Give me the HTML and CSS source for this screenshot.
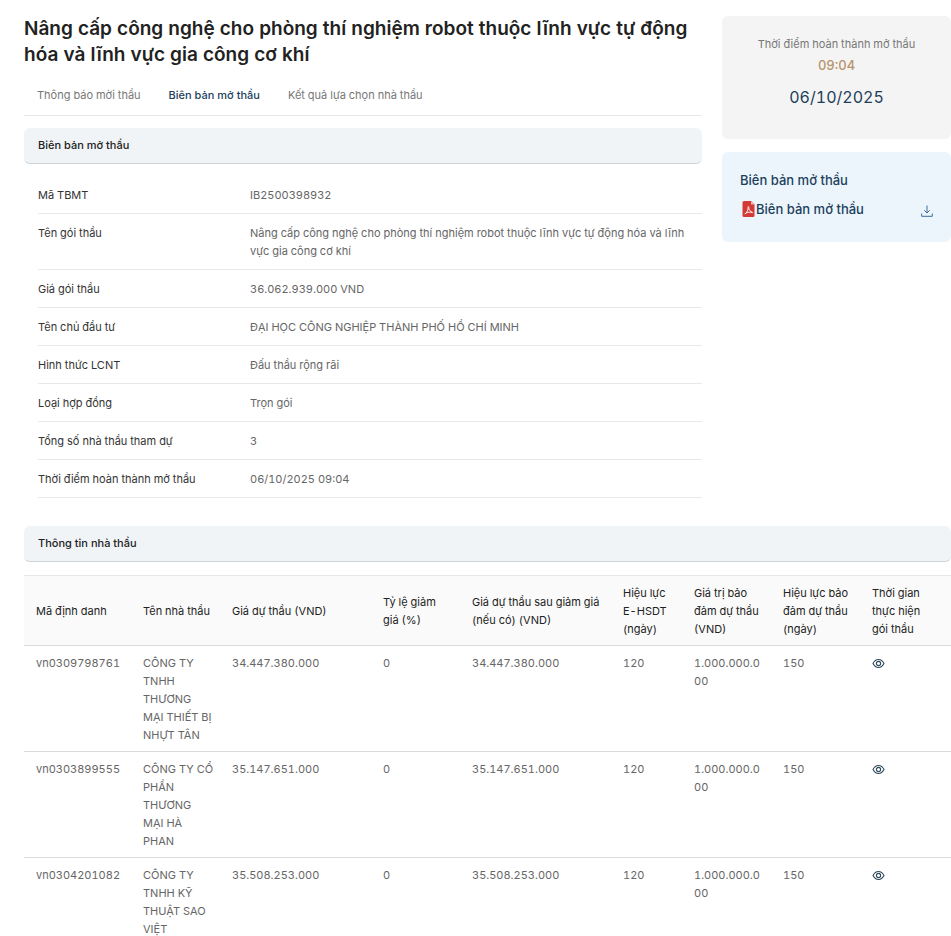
FILE: index.html
```html
<!DOCTYPE html>
<html lang="vi">
    <head>
        <meta charset="utf-8">
        <meta name="viewport" content="width=device-width, initial-scale=1">
        <title>Biên bản mở thầu</title>
        <link rel="stylesheet" href="styles.css">
    </head>
    <body>
        <svg class="defs" aria-hidden="true">
            <symbol id="eye" viewBox="0 0 14 12">
                <path d="M1 6C2.5 3.1 4.5 1.7 7 1.7S11.5 3.1 13 6C11.5 8.9 9.5 10.3 7 10.3S2.5 8.9 1 6Z" fill="none" stroke="currentColor" stroke-width="1.2"/>
                <circle cx="7" cy="6" r="2.3" fill="none" stroke="currentColor" stroke-width="1.2"/>
            </symbol>
        </svg>

        <div class="top">
            <main class="main">
                <h1 class="title">Nâng cấp công nghệ cho phòng thí nghiệm robot thuộc lĩnh vực tự động hóa và lĩnh vực gia công cơ khí</h1>
                <nav class="tabs">
                    <a class="tab" href="#">Thông báo mời thầu</a>
                    <a class="tab active" href="#">Biên bản mở thầu</a>
                    <a class="tab" href="#">Kết quả lựa chọn nhà thầu</a>
                </nav>

                <h2 class="section-title">Biên bản mở thầu</h2>
                <dl class="info">
                    <div class="info-row"><dt>Mã TBMT</dt><dd>IB2500398932</dd></div>
                    <div class="info-row"><dt>Tên gói thầu</dt><dd>Nâng cấp công nghệ cho phòng thí nghiệm robot thuộc lĩnh vực tự động hóa và lĩnh vực gia công cơ khí</dd></div>
                    <div class="info-row"><dt>Giá gói thầu</dt><dd>36.062.939.000 VND</dd></div>
                    <div class="info-row"><dt>Tên chủ đầu tư</dt><dd>ĐẠI HỌC CÔNG NGHIỆP THÀNH PHỐ HỒ CHÍ MINH</dd></div>
                    <div class="info-row"><dt>Hình thức LCNT</dt><dd>Đấu thầu rộng rãi</dd></div>
                    <div class="info-row"><dt>Loại hợp đồng</dt><dd>Trọn gói</dd></div>
                    <div class="info-row"><dt>Tổng số nhà thầu tham dự</dt><dd>3</dd></div>
                    <div class="info-row"><dt>Thời điểm hoàn thành mở thầu</dt><dd>06/10/2025 09:04</dd></div>
                </dl>
            </main>

            <aside class="side">
                <div class="card time-card">
                    <p class="time-label">Thời điểm hoàn thành mở thầu</p>
                    <p class="time-hour">09:04</p>
                    <p class="time-date">06/10/2025</p>
                </div>
                <div class="card file-card">
                    <h3 class="file-title">Biên bản mở thầu</h3>
                    <div class="file">
                        <a class="file-link" href="#">
                            <svg class="pdf-icon" viewBox="0 0 12 16" aria-hidden="true">
                                <path d="M1.5 0H8.5L12 3.5V14.5Q12 16 10.5 16H1.5Q0 16 0 14.5V1.5Q0 0 1.5 0Z" fill="#d33a35"/>
                                <path d="M8.500 0V3.500H12Z" fill="#f3b5b3"/>
                                <path d="M2.5 13C4.5 11.5 6 8.5 5.6 6.2C5.5 5.2 6.6 5.3 6.3 6.7C5.9 8.5 8 10.8 9.7 11.2C10.5 11.4 10.2 12 9.3 11.6C7.5 10.8 4.8 11.3 3.5 12.1C2.6 12.6 2 13.2 2.5 13Z" fill="none" stroke="#fff" stroke-width="0.9"/>
                            </svg>Biên bản mở thầu
                        </a>
                        <button class="download" type="button" aria-label="Tải xuống">
                            <svg viewBox="0 0 12 12" aria-hidden="true">
                                <path d="M6 0.5V8M3.3 5.3L6 8L8.7 5.3M0.7 8.5V11.3H11.3V8.5" fill="none" stroke="currentColor"/>
                            </svg>
                        </button>
                    </div>
                </div>
            </aside>
        </div>

        <section class="bidders">
            <h2 class="section-title">Thông tin nhà thầu</h2>
            <table class="bid-table">
                <colgroup>
                    <col class="c-id"><col class="c-name"><col class="c-price"><col class="c-rate"><col class="c-final"><col class="c-valid"><col class="c-bond"><col class="c-bond"><col class="c-time">
                </colgroup>
                <thead>
                    <tr>
                        <th>Mã định danh</th>
                        <th>Tên nhà thầu</th>
                        <th>Giá dự thầu (VND)</th>
                        <th>Tỷ lệ giảm giá (%)</th>
                        <th>Giá dự thầu sau giảm giá (nếu có) (VND)</th>
                        <th>Hiệu lực E-HSDT (ngày)</th>
                        <th>Giá trị bảo đảm dự thầu (VND)</th>
                        <th>Hiệu lực bảo đảm dự thầu (ngày)</th>
                        <th>Thời gian thực hiện<br>gói thầu</th>
                    </tr>
                </thead>
                <tbody>
                    <tr>
                        <td>vn0309798761</td>
                        <td>CÔNG TY TNHH THƯƠNG<br>MẠI THIẾT BỊ NHỰT TÂN</td>
                        <td>34.447.380.000</td>
                        <td>0</td>
                        <td>34.447.380.000</td>
                        <td>120</td>
                        <td>1.000.000.000</td>
                        <td>150</td>
                        <td><button class="view" type="button" aria-label="Xem"><svg><use href="#eye"/></svg></button></td>
                    </tr>
                    <tr>
                        <td>vn0303899555</td>
                        <td>CÔNG TY CỔ PHẦN THƯƠNG<br>MẠI HÀ<br>PHAN</td>
                        <td>35.147.651.000</td>
                        <td>0</td>
                        <td>35.147.651.000</td>
                        <td>120</td>
                        <td>1.000.000.000</td>
                        <td>150</td>
                        <td><button class="view" type="button" aria-label="Xem"><svg><use href="#eye"/></svg></button></td>
                    </tr>
                    <tr>
                        <td>vn0304201082</td>
                        <td>CÔNG TY TNHH KỸ THUẬT SAO VIỆT</td>
                        <td>35.508.253.000</td>
                        <td>0</td>
                        <td>35.508.253.000</td>
                        <td>120</td>
                        <td>1.000.000.000</td>
                        <td>150</td>
                        <td><button class="view" type="button" aria-label="Xem"><svg><use href="#eye"/></svg></button></td>
                    </tr>
                </tbody>
            </table>
        </section>
    </body>
</html>
```

FILE: styles.css
```css
* {
    box-sizing: border-box;
}

body {
    margin: 0;
    padding: 16px 0 0 24px;
    background: #fff;
    color: #222;
    font: 11px/18px Inter, "Noto Sans", sans-serif;
    font-variant-numeric: tabular-nums;
}

h1, h2, h3, p, dl, dd {
    margin: 0;
}

a {
    color: inherit;
    text-decoration: none;
}

button {
    padding: 0;
    border: 0;
    background: none;
    cursor: pointer;
}

.defs {
    display: none;
}

.top {
    display: grid;
    grid-template-columns: minmax(0, 678fr) minmax(0, 229fr);
    gap: 20px;
    align-items: start;
}

.title {
    font-size: 19px;
    line-height: 26px;
    font-weight: 600;
}

.tabs {
    display: flex;
    gap: 28px;
    padding: 18px 13px 11px;
    border-bottom: 1px solid #e6e9eb;
    color: #777;
}

.tab.active {
    color: #1d3f5c;
    font-weight: 500;
}

.section-title {
    padding: 8px 14px 9px;
    border-bottom: 1px solid #ccd4da;
    border-radius: 6px;
    background: #f0f4f7;
    font-size: 11px;
    line-height: 18px;
    font-weight: 500;
}

.main .section-title {
    margin-top: 12px;
}

.info {
    margin: 12px 0 0 14px;
}

.info-row {
    display: grid;
    grid-template-columns: 212px 1fr;
    padding: 10px 0 9px;
    border-bottom: 1px solid #e8e8e8;
}

.info-row dt {
    color: #333;
}

.info-row dd {
    color: #666;
}

.card {
    border-radius: 6px;
}

.time-card {
    padding: 19px 16px 28px;
    background: #f4f4f4;
    text-align: center;
}

.time-label {
    color: #777;
}

.time-hour {
    color: #b8936b;
    font-size: 13px;
    line-height: 24px;
    font-weight: 500;
}

.time-date {
    padding-top: 6px;
    color: #1d3f5c;
    font-size: 16px;
    line-height: 28px;
}

.file-card {
    margin-top: 13px;
    padding: 18px 18px 23px;
    background: #ecf5fc;
    color: #1d3f5c;
}

.file-title, .file-link {
    font-size: 13px;
    line-height: 20px;
    font-weight: 500;
}

.file {
    display: flex;
    align-items: flex-end;
    justify-content: space-between;
    padding-top: 9px;
}

.file-link {
    display: flex;
    align-items: center;
    gap: 1px;
    padding-left: 2px;
}

.pdf-icon {
    width: 13px;
    height: 16px;
}

.download {
    width: 12px;
    height: 16px;
    color: #3a6f9c;
}

.download svg {
    display: block;
    width: 12px;
    height: 12px;
}

.bidders {
    margin-top: 28px;
}

.bid-table {
    width: 100%;
    margin-top: 13px;
    border-collapse: collapse;
    table-layout: fixed;
    text-align: left;
}

.bid-table th {
    padding: 8px 8px 7px 12px;
    border-top: 1px solid #e8e8e8;
    border-bottom: 1px solid #d9dcdd;
    background: #fafafa;
    font-weight: 400;
}

.bid-table td {
    padding: 8px 4px 7px 12px;
    border-bottom: 1px solid #d9dcdd;
    color: #666;
    vertical-align: top;
    overflow-wrap: anywhere;
}

.c-id { width: 107px; }
.c-name { width: 89px; }
.c-price { width: 151px; }
.c-rate { width: 89px; }
.c-final { width: 151px; }
.c-valid { width: 71px; }
.c-bond { width: 89px; }

.view {
    display: block;
    padding-top: 4px;
    color: #2d4a5c;
}

.view svg {
    display: block;
    width: 13px;
    height: 11px;
}
```
